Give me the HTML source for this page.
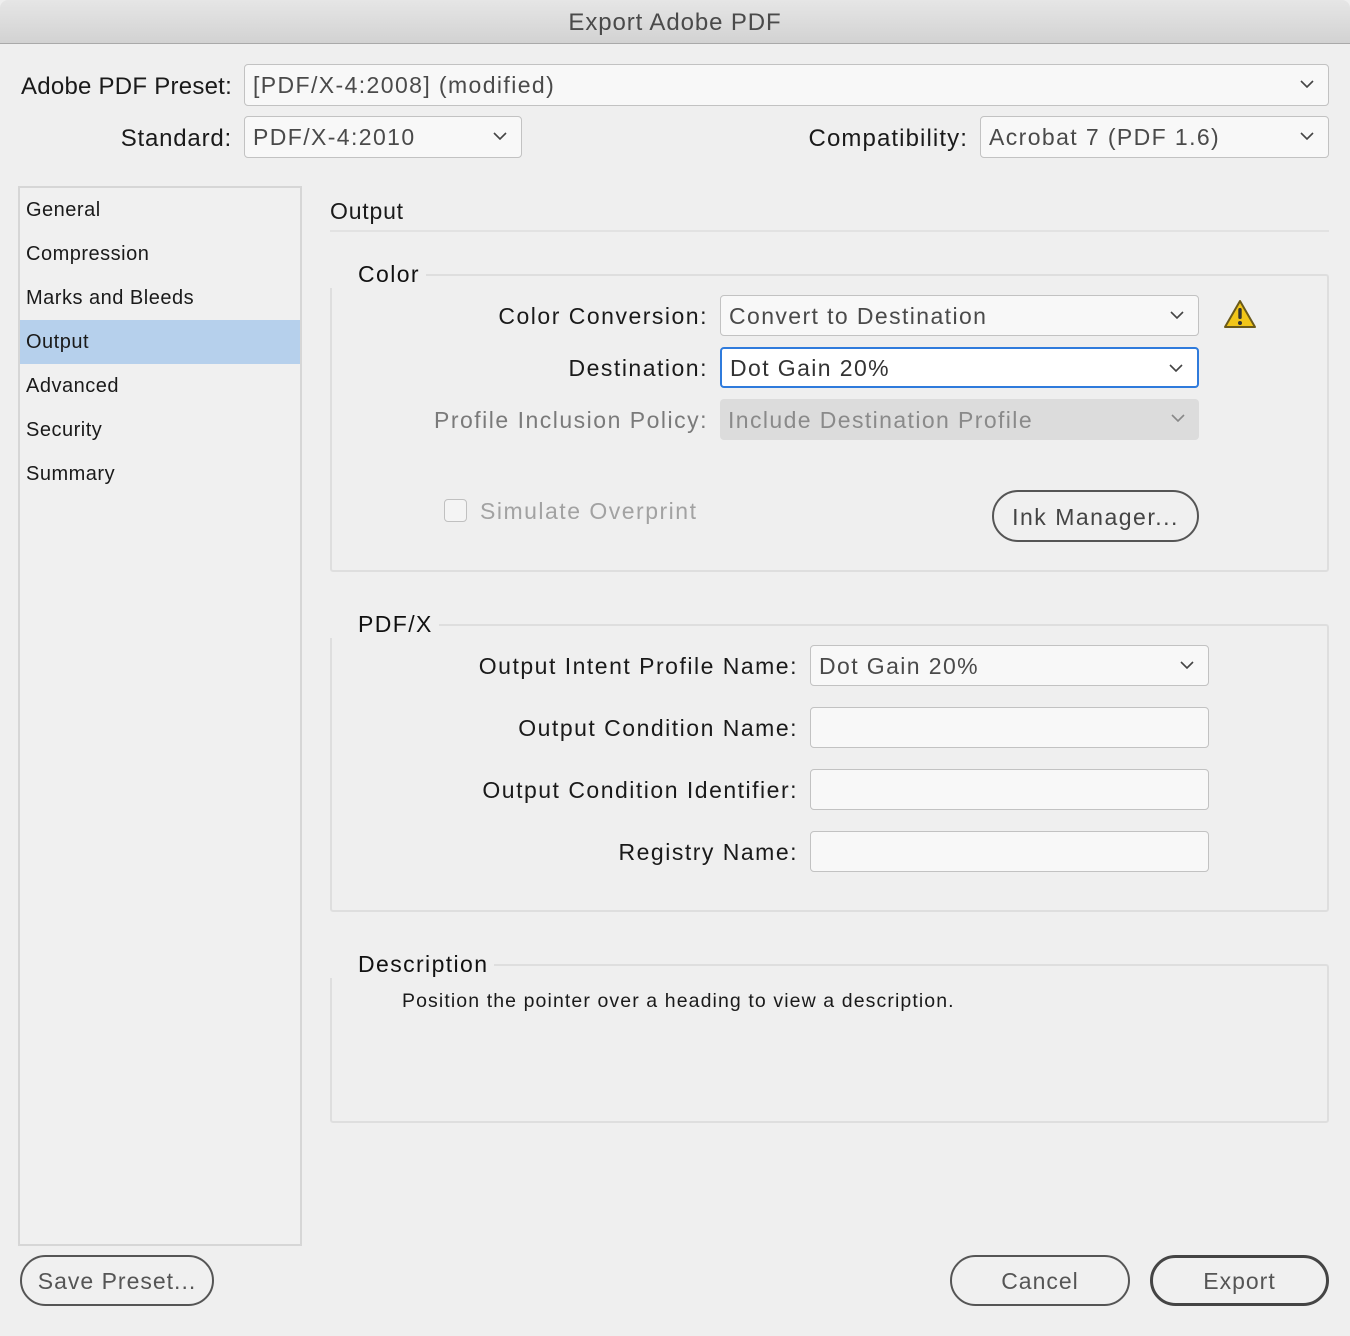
<!DOCTYPE html>
<html><head><meta charset="utf-8"><style>
*{box-sizing:border-box;margin:0;padding:0}
body{width:1350px;height:1336px;background:#efefef;font-family:"Liberation Sans",sans-serif;position:relative;overflow:hidden;color:#1a1a1a}
.a{position:absolute;white-space:nowrap}
.t{font-size:23px;line-height:30px;letter-spacing:1.5px}
.r{text-align:right}
.box{position:absolute;border:1.5px solid #c2c2c2;border-radius:4px;background:#f8f8f8;font-size:23px;line-height:41px;padding-left:8px;color:#4a4a4a;letter-spacing:1.4px}
.chev{position:absolute;right:14px;top:15px;width:14px;height:8px}
.grp{position:absolute;border:2px solid #dedede;border-radius:3px}
.leg{position:absolute;background:#efefef;padding:0 6px 0 28px;left:-2px;font-size:23px;line-height:28px;color:#111;letter-spacing:1.4px}
.side{font-size:20px;line-height:26px;position:absolute;left:26px;letter-spacing:0.5px}
.btn{position:absolute;border:2px solid #555;border-radius:26px;text-align:center;font-size:23px;color:#555;background:#f0f0f0;letter-spacing:1px}
</style></head><body>
<div class="a" style="left:0;top:0;width:1350px;height:44px;background:linear-gradient(#e6e6e6,#d2d2d2);border-bottom:1px solid #a9a9a9;border-radius:8px 8px 0 0;text-align:center;font-size:24px;line-height:46px;color:#4a4a4a;letter-spacing:0.9px">Export Adobe PDF</div>

<div class="a t r" style="right:1118px;top:72px;font-size:24px;letter-spacing:0.25px">Adobe PDF Preset:</div>
<div class="box" style="left:244px;top:64px;width:1085px;height:42px">[PDF/X-4:2008] (modified)<svg class="chev" viewBox="0 0 14 8"><path d="M1 1L7 7L13 1" fill="none" stroke="#444" stroke-width="1.6"/></svg></div>
<div class="a t r" style="right:1118px;top:124px;font-size:24px;letter-spacing:0.8px">Standard:</div>
<div class="box" style="left:244px;top:116px;width:278px;height:42px">PDF/X-4:2010<svg class="chev" viewBox="0 0 14 8"><path d="M1 1L7 7L13 1" fill="none" stroke="#444" stroke-width="1.6"/></svg></div>
<div class="a t r" style="right:382px;top:124px;font-size:24px;letter-spacing:1.1px">Compatibility:</div>
<div class="box" style="left:980px;top:116px;width:349px;height:42px">Acrobat 7 (PDF 1.6)<svg class="chev" viewBox="0 0 14 8"><path d="M1 1L7 7L13 1" fill="none" stroke="#444" stroke-width="1.6"/></svg></div>

<div class="a" style="left:18px;top:186px;width:284px;height:1060px;border:2px solid #d6d6d6;background:#f0f0f0"></div>
<div class="a" style="left:20px;top:320px;width:280px;height:44px;background:#b6d0ec"></div>
<div class="side" style="top:197px">General</div>
<div class="side" style="top:241px">Compression</div>
<div class="side" style="top:285px">Marks and Bleeds</div>
<div class="side" style="top:329px">Output</div>
<div class="side" style="top:373px">Advanced</div>
<div class="side" style="top:417px">Security</div>
<div class="side" style="top:461px">Summary</div>

<div class="a" style="left:330px;top:197px;font-size:23px;line-height:28px;letter-spacing:0.8px">Output</div>
<div class="a" style="left:330px;top:230px;width:999px;height:2px;background:#e2e2e2"></div>

<div class="grp" style="left:330px;top:274px;width:999px;height:298px"><div class="leg" style="top:-16px">Color</div></div>
<div class="a t r" style="right:642px;top:301px">Color Conversion:</div>
<div class="box" style="left:720px;top:295px;width:479px;height:41px">Convert to Destination<svg class="chev" viewBox="0 0 14 8"><path d="M1 1L7 7L13 1" fill="none" stroke="#444" stroke-width="1.6"/></svg></div>
<svg class="a" style="left:1223px;top:299px" width="34" height="30" viewBox="0 0 34 30"><path d="M17 2L32 28H2Z" fill="#f2c619" stroke="#6b5a1a" stroke-width="2" stroke-linejoin="round"/><rect x="15.3" y="9" width="3.4" height="11" rx="1.5" fill="#333"/><circle cx="17" cy="24" r="2" fill="#333"/></svg>
<div class="a t r" style="right:642px;top:353px">Destination:</div>
<div class="box" style="left:720px;top:347px;width:479px;height:41px;border:2px solid #2f7bdc;background:#fff;color:#333;line-height:39px">Dot Gain 20%<svg class="chev" viewBox="0 0 14 8"><path d="M1 1L7 7L13 1" fill="none" stroke="#444" stroke-width="1.6"/></svg></div>
<div class="a t r" style="right:642px;top:405px;color:#7a7a7a">Profile Inclusion Policy:</div>
<div class="box" style="left:720px;top:399px;width:479px;height:41px;border:none;background:#dcdcdc;color:#8a8a8a;padding-left:8px;line-height:43px">Include Destination Profile<svg class="chev" viewBox="0 0 14 8"><path d="M1 1L7 7L13 1" fill="none" stroke="#888" stroke-width="1.6"/></svg></div>
<div class="a" style="left:444px;top:499px;width:23px;height:23px;border:1.5px solid #c0c0c0;border-radius:4px;background:#f4f4f4"></div>
<div class="a t" style="left:480px;top:496px;color:#a2a2a2">Simulate Overprint</div>
<div class="btn" style="left:992px;top:490px;width:207px;height:52px;line-height:50px;color:#444;letter-spacing:1.5px">Ink Manager...</div>

<div class="grp" style="left:330px;top:624px;width:999px;height:288px"><div class="leg" style="top:-16px">PDF/X</div></div>
<div class="a t r" style="right:552px;top:651px">Output Intent Profile Name:</div>
<div class="box" style="left:810px;top:645px;width:399px;height:41px">Dot Gain 20%<svg class="chev" viewBox="0 0 14 8"><path d="M1 1L7 7L13 1" fill="none" stroke="#444" stroke-width="1.6"/></svg></div>
<div class="a t r" style="right:552px;top:713px">Output Condition Name:</div>
<div class="box" style="left:810px;top:707px;width:399px;height:41px"></div>
<div class="a t r" style="right:552px;top:775px">Output Condition Identifier:</div>
<div class="box" style="left:810px;top:769px;width:399px;height:41px"></div>
<div class="a t r" style="right:552px;top:837px">Registry Name:</div>
<div class="box" style="left:810px;top:831px;width:399px;height:41px"></div>

<div class="grp" style="left:330px;top:964px;width:999px;height:159px"><div class="leg" style="top:-16px">Description</div></div>
<div class="a" style="left:402px;top:988px;font-size:19.5px;line-height:26px;letter-spacing:1.1px">Position the pointer over a heading to view a description.</div>

<div class="btn" style="left:20px;top:1255px;width:194px;height:51px;line-height:49px">Save Preset...</div>
<div class="btn" style="left:950px;top:1255px;width:180px;height:51px;line-height:49px">Cancel</div>
<div class="btn" style="left:1150px;top:1255px;width:179px;height:51px;line-height:47px;border:3px solid #444">Export</div>
</body></html>
